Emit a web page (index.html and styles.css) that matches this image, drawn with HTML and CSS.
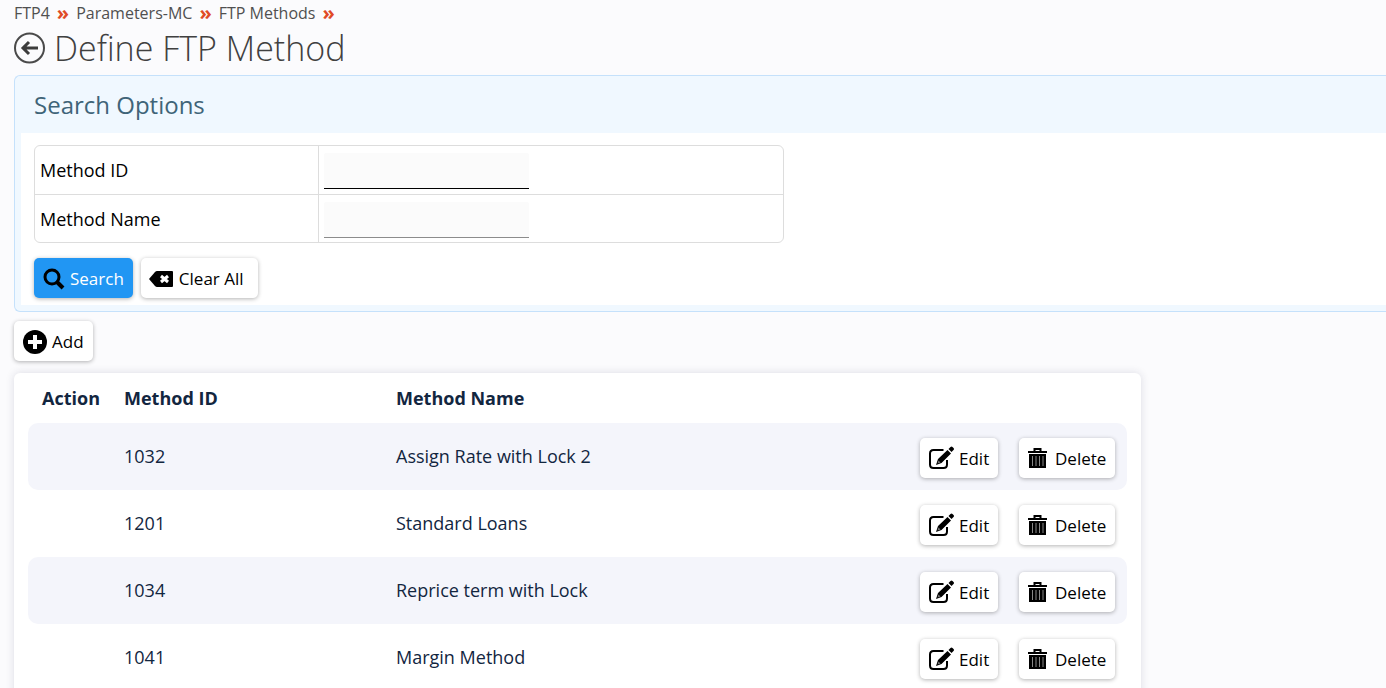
FILE: index.html
```html
<!DOCTYPE html>
<html lang="en">
  <head>
    <meta charset="UTF-8" />
    <meta name="viewport" content="width=device-width, initial-scale=1.0" />
    <title>Define FTP Method</title>
    <link rel="stylesheet" href="styles.css">
  </head>
  <body>
    <!-- Shared icons -->
    <svg class="icon-defs" aria-hidden="true">
      <symbol id="icon-edit" viewBox="0 0 25 24">
        <path d="M14.500 4H4.500Q1 4 1 7.500V18.500Q1 22 4.500 22H14.500Q18 22 18 18.500V14" fill="none" stroke="#000" stroke-width="2" />
        <path d="M7 19l2-6L18.500 4l3.500 3.500-9.500 9.500zM19.500 3l2-2q1-1 2 0l1 1q1 1 0 2l-2 2z" />
        <path d="M8.500 17.500l1-3 2 2z" fill="#777" />
      </symbol>
      <symbol id="icon-trash" viewBox="0 0 20 20">
        <path d="M6.500 3V1h6v2" fill="none" stroke="#000" stroke-width="2" />
        <path d="M0 3h19v2H0zM1 6h17v14H1z" />
        <path d="M4.500 8v10M8 8v10M11.500 8v10M15 8v10" stroke="#888" stroke-width="1" />
      </symbol>
    </svg>

    <nav class="breadcrumb">
      <a href="#">FTP4</a>
      <span class="sep">»</span>
      <a href="#">Parameters-MC</a>
      <span class="sep">»</span>
      <a href="#">FTP Methods</a>
      <span class="sep">»</span>
    </nav>

    <div class="page-title">
      <a href="#" class="back" aria-label="Back">
        <svg width="32" height="32" viewBox="0 0 32 32">
          <circle cx="15.500" cy="16" r="14.500" fill="none" stroke="#4a4a4a" stroke-width="2" />
          <path d="M24 16H9M15 10l-6 6 6 6" fill="none" stroke="#3c3c3c" stroke-width="3" />
        </svg>
      </a>
      <h1>Define FTP Method</h1>
    </div>

    <section class="search-panel">
      <h2>Search Options</h2>
      <form class="search-body">
        <div class="fields">
          <div class="field">
            <label for="methodId">Method ID</label>
            <div class="control"><input type="text" id="methodId" class="active" /></div>
          </div>
          <div class="field">
            <label for="methodName">Method Name</label>
            <div class="control"><input type="text" id="methodName" /></div>
          </div>
        </div>
        <div class="buttons">
          <button type="button" class="btn primary">
            <svg width="22" height="22" viewBox="0 0 22 22">
              <circle cx="9" cy="9" r="7" fill="none" stroke="#000" stroke-width="3" />
              <path d="M14 14l6 6" stroke="#000" stroke-width="4" />
            </svg>
            Search
          </button>
          <button type="reset" class="btn clear">
            <svg width="25" height="16" viewBox="0 0 25 16">
              <path d="M0 8l6-7q1-1 2-1h15q1 0 1 1v14q0 1-1 1H8q-1 0-2-1z" />
              <path d="M12 5l7 6M19 5l-7 6" stroke="#fff" stroke-width="3" />
            </svg>
            Clear All
          </button>
        </div>
      </form>
    </section>

    <button type="button" class="btn add">
      <svg width="24" height="24" viewBox="0 0 24 24">
        <circle cx="12" cy="12" r="12" />
        <path d="M12 5v14M5 12h14" stroke="#fff" stroke-width="4" />
      </svg>
      Add
    </button>

    <div class="card">
      <table>
        <thead>
          <tr>
            <th class="col-action">Action</th>
            <th class="col-id">Method ID</th>
            <th>Method Name</th>
            <th class="col-edit"></th>
            <th class="col-delete"></th>
          </tr>
        </thead>
        <tbody>
          <tr>
            <td></td>
            <td>1032</td>
            <td>Assign Rate with Lock 2</td>
            <td class="tool"><button type="button" class="btn"><svg width="25" height="24"><use href="#icon-edit" /></svg>Edit</button></td>
            <td class="tool"><button type="button" class="btn delete"><svg width="20" height="20"><use href="#icon-trash" /></svg>Delete</button></td>
          </tr>
          <tr>
            <td></td>
            <td>1201</td>
            <td>Standard Loans</td>
            <td class="tool"><button type="button" class="btn"><svg width="25" height="24"><use href="#icon-edit" /></svg>Edit</button></td>
            <td class="tool"><button type="button" class="btn delete"><svg width="20" height="20"><use href="#icon-trash" /></svg>Delete</button></td>
          </tr>
          <tr>
            <td></td>
            <td>1034</td>
            <td>Reprice term with Lock</td>
            <td class="tool"><button type="button" class="btn"><svg width="25" height="24"><use href="#icon-edit" /></svg>Edit</button></td>
            <td class="tool"><button type="button" class="btn delete"><svg width="20" height="20"><use href="#icon-trash" /></svg>Delete</button></td>
          </tr>
          <tr>
            <td></td>
            <td>1041</td>
            <td>Margin Method</td>
            <td class="tool"><button type="button" class="btn"><svg width="25" height="24"><use href="#icon-edit" /></svg>Edit</button></td>
            <td class="tool"><button type="button" class="btn delete"><svg width="20" height="20"><use href="#icon-trash" /></svg>Delete</button></td>
          </tr>
        </tbody>
      </table>
    </div>
  </body>
</html>
```
FILE: styles.css
```css
* {
  box-sizing: border-box;
}
body {
  font-family: "Open Sans", "Noto Sans", sans-serif;
  font-size: 18px;
  font-weight: 400;
  margin: 0;
  padding: 2px 0 0 14px;
  background-color: #fbfbfd;
  color: #000;
}
.icon-defs {
  display: none;
}
.breadcrumb {
  display: flex;
  gap: 7px;
  font-size: 16px;
  line-height: 22px;
}
.breadcrumb a {
  color: #505050;
  text-decoration: none;
}
.breadcrumb .sep {
  color: #e04a26;
  font-size: 20px;
  font-weight: bold;
}
.page-title {
  display: flex;
  align-items: center;
  gap: 8px;
  height: 51px;
  padding-bottom: 4px;
}
.back {
  display: flex;
}
h1 {
  margin: 0;
  font-size: 34px;
  font-weight: 300;
  color: #404040;
}
.search-panel {
  padding: 0 0 6px 6px;
  background-color: #f0f8ff;
  border: 1px solid #c5e1fb;
  border-right: none;
  border-radius: 6px 0 0 6px;
}
h2 {
  margin: 0;
  padding-left: 13px;
  font-size: 24px;
  font-weight: 400;
  line-height: 57px;
  color: #3f6478;
}
.search-body {
  padding: 12px 13px 7px;
  background-color: #fff;
}
.fields {
  max-width: 750px;
  border: 1px solid #ddd;
  border-radius: 6px;
}
.field {
  display: grid;
  grid-template-columns: 283px 1fr;
  align-items: center;
  height: 48px;
}
.field + .field {
  border-top: 1px solid #ddd;
}
.field label {
  padding-left: 5px;
}
.control {
  height: 100%;
  padding: 7px 5px 5px;
  border-left: 1px solid #ddd;
}
.control input {
  width: 205px;
  height: 36px;
  font: inherit;
  background-color: #fbfbfb;
  border: none;
  border-bottom: 1px solid #8c8c8c;
  border-radius: 2px 2px 0 0;
  outline: none;
}
.control input.active {
  border-bottom-color: #000;
}
.buttons {
  display: flex;
  gap: 8px;
  margin-top: 15px;
}
.btn {
  display: inline-flex;
  align-items: center;
  gap: 5px;
  height: 40px;
  padding: 1px 9px 0;
  font-family: inherit;
  font-size: 17px;
  color: #000;
  white-space: nowrap;
  background-color: #fff;
  border: none;
  border-radius: 5px;
  box-shadow: 0 1px 4px rgba(0, 0, 0, 0.3);
  cursor: pointer;
}
.btn.primary {
  color: #fff;
  font-weight: 500;
  background-color: #2196f3;
}
.btn.clear {
  padding-left: 8px;
  padding-right: 14px;
}
.btn.delete {
  gap: 7px;
}
.btn.add {
  margin: 9px 0 12px;
}
.card {
  max-width: 1127px;
  padding: 0 14px 14px;
  background-color: #fff;
  border-radius: 6px;
  box-shadow: 0 0 8px rgba(40, 40, 80, 0.15);
}
table {
  width: 100%;
  table-layout: fixed;
  border-collapse: collapse;
  color: #12263f;
}
th {
  height: 50px;
  padding: 0 0 0 14px;
  text-align: left;
  font-weight: 700;
}
td {
  height: 67px;
  padding: 0 0 2px 14px;
}
td.tool {
  padding: 2px 0 0 14px;
}
.col-action {
  width: 82px;
}
.col-id {
  width: 272px;
}
.col-edit {
  width: 99px;
}
.col-delete {
  width: 122px;
}
tbody tr:nth-child(odd) td {
  background-color: #f4f5fb;
}
tbody td:first-child {
  border-radius: 10px 0 0 10px;
}
tbody td:last-child {
  border-radius: 0 10px 10px 0;
}
```
